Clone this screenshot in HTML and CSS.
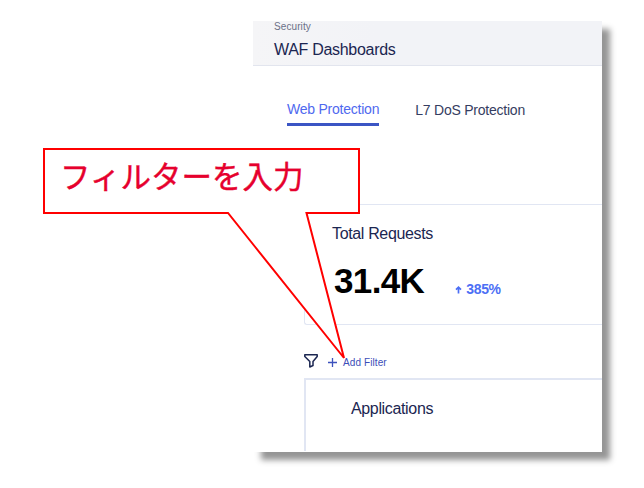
FILE: index.html
```html
<!DOCTYPE html>
<html lang="ja">
<head>
<meta charset="utf-8">
<title>WAF Dashboards</title>
<link rel="stylesheet" href="styles.css">
</head>
<body>
<main class="window">
  <header class="header">
    <div class="crumb">Security</div>
    <h1 class="title">WAF Dashboards</h1>
  </header>
  <nav class="tabs">
    <a class="tab active">Web Protection</a>
    <a class="tab">L7 DoS Protection</a>
  </nav>
  <section class="card requests">
    <h2 class="card-title">Total Requests</h2>
    <div class="metric">
      <strong class="value">31.4K</strong>
      <span class="trend">
        <svg class="arrow" width="7" height="8" viewBox="0 0 7 8"><path d="M3.5 7.5V1.2M1 3.7l2.5-2.5L6 3.7" fill="none" stroke="currentColor" stroke-width="1.7"/></svg>
        385%
      </span>
    </div>
  </section>
  <div class="filters">
    <svg class="funnel" width="14" height="15" viewBox="0 0 14 15"><path d="M.8 1.8h12.4v1.7L9 8.5v4L5.8 14V8.5l-5-5z" fill="none" stroke="currentColor" stroke-width="1.5" stroke-linejoin="round"/></svg>
    <svg class="plus" width="9" height="9" viewBox="0 0 9 9"><path d="M0 4.5h9M4.5 0v9" stroke="currentColor" stroke-width="1.3"/></svg>
    <span class="add">Add Filter</span>
  </div>
  <section class="card apps">
    <h2 class="card-title">Applications</h2>
  </section>
</main>
<aside class="callout">
  <svg class="bubble" width="320" height="214" viewBox="0 0 320 214"><path d="M2 2H317V66H264.5L302 211L186 66H2z" fill="#fff" stroke="#f00" stroke-width="2" stroke-miterlimit="2"/></svg>
  <p class="message">フィルターを入力</p>
</aside>
</body>
</html>
```
FILE: styles.css
```css
* { box-sizing: border-box; }

body {
  margin: 0;
  height: 488px;
  padding: 21px 0 0 253px;
  overflow: hidden;
  background: #fff;
  font-family: "Liberation Sans", Arial, sans-serif;
  color: #1b2651;
}

.window {
  width: 349px;
  height: 431px;
  display: flex;
  flex-direction: column;
  background: #fff;
  box-shadow: 8px 8px 6px #959595;
  clip-path: inset(0 -20px -20px 0);
}

.header {
  height: 45px;
  flex: none;
  padding-left: 21px;
  background: linear-gradient(90deg, #f5f5f7, #f2f3f7 35%);
  border-bottom: 1px solid #e2e5ee;
}

.crumb {
  height: 12px;
  font-size: 10px;
  line-height: 12px;
  letter-spacing: 0.1px;
  color: #6c7188;
}

.title {
  margin: 7px 0 0;
  font-size: 16px;
  letter-spacing: -0.3px;
  font-weight: 400;
  line-height: 20px;
}

.tabs {
  display: flex;
  gap: 36px;
  margin: 33px 0 0 34px;
  height: 27px;
  flex: none;
}

.tab {
  font-size: 14px;
  letter-spacing: -0.23px;
  line-height: 22px;
  white-space: nowrap;
  color: #353d61;
}

.tab.active {
  line-height: 20px;
  color: #4f69ef;
  border-bottom: 3px solid #3b55c4;
}

.card {
  flex: none;
  margin-left: 51px;
  border: 1px solid #e1e6f3;
  border-right: 0;
}

.card-title {
  margin: 0;
  font-size: 16px;
  letter-spacing: -0.35px;
  font-weight: 400;
  line-height: 18px;
}

.requests {
  height: 121px;
  margin-top: 78px;
  padding: 20px 0 0 27px;
  border-radius: 3px 0 0 3px;
}

.metric {
  display: flex;
  align-items: center;
  gap: 31px;
  height: 40px;
  margin-top: 18px;
  padding-left: 2px;
}

.value {
  font-size: 35px;
  letter-spacing: -0.65px;
  line-height: 40px;
  color: #000;
}

.trend {
  display: flex;
  align-items: center;
  gap: 4px;
  padding-top: 15px;
  font-size: 14px;
  letter-spacing: -0.3px;
  font-weight: 700;
  line-height: 16px;
  color: #4c6ff5;
}

.arrow {
  margin-top: 2px;
}

.filters {
  display: flex;
  align-items: center;
  height: 18px;
  flex: none;
  margin: 28px 0 0 51px;
}

.funnel {
  margin-bottom: 3px;
}

.plus {
  margin: 1px 0 0 10px;
  color: #3c52bd;
}

.add {
  margin: 2px 0 0 6px;
  font-size: 10px;
  letter-spacing: 0.1px;
  line-height: 12px;
  color: #3b4db8;
}

.apps {
  height: 73px;
  margin-top: 7px;
  padding: 20px 0 0 45px;
  border-width: 2px 0 0 2px;
}

.callout {
  position: absolute;
  left: 42px;
  top: 147px;
  width: 320px;
  height: 214px;
}

.bubble {
  position: absolute;
  inset: 0;
}

.message {
  position: relative;
  margin: 6px 0 0 18px;
  font-family: "Noto Sans CJK JP", sans-serif;
  font-size: 30.5px;
  line-height: 44px;
  white-space: nowrap;
  color: #e6002d;
  -webkit-text-stroke: 0.4px #e6002d;
}
```
